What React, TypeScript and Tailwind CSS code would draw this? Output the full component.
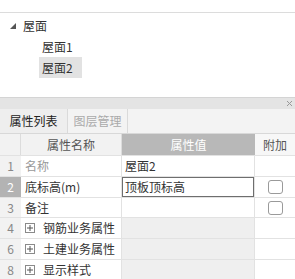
const font = {
  fontFamily: '"Noto Sans CJK SC", "Noto Sans", sans-serif',
};

type Row = {
  no: string;
  name: string;
  value?: string;
  group?: boolean;
  muted?: boolean;
  selected?: boolean;
  check?: boolean;
  short?: boolean;
};

const rows: Row[] = [
  { no: "1", name: "名称", value: "屋面2", muted: true },
  { no: "2", name: "底标高(m)", value: "顶板顶标高", selected: true, check: true },
  { no: "3", name: "备注", check: true, short: true },
  { no: "4", name: "钢筋业务属性", group: true },
  { no: "6", name: "土建业务属性", group: true },
  { no: "8", name: "显示样式", group: true, short: true },
];

function PlusBox() {
  return (
    <span className="mr-[8px] flex h-[10px] w-[10px] items-center justify-center border border-[#8a8a8a] bg-white">
      <svg width="6" height="6" viewBox="0 0 6 6">
        <path d="M0 3h6M3 0v6" stroke="#555" strokeWidth="1" />
      </svg>
    </span>
  );
}

function CheckBox() {
  return <span className="block h-[14px] w-[15px] rounded-[3px] border border-[#9a9a9a] bg-white" />;
}

export default function App() {
  return (
    <div
      className="flex h-[279px] w-[295px] flex-col overflow-hidden bg-white text-[12px] text-[#333]"
      style={font}
    >
      <div className="h-[12px] shrink-0" />
      <div className="flex h-[85px] shrink-0 flex-col border-t border-[#dcdcdc]">
        <div className="mt-[3px] flex h-[20px] items-center pl-[10px]">
          <svg width="6" height="6" viewBox="0 0 6 6" className="mr-[7px]">
            <path d="M6 0V6H0Z" fill="#555" />
          </svg>
          <span>屋面</span>
        </div>
        <div className="flex h-[21px] items-center pl-[42px]">屋面1</div>
        <div className="ml-[39px] flex h-[21px] w-[43px] items-center bg-[#e2e2e2] pl-[3px]">屋面2</div>
      </div>
      <div className="flex h-[12px] shrink-0 items-center justify-end border-t border-[#d4d4d4] bg-[#e4e4e4] pr-[3px]">
        <svg width="5" height="5" viewBox="0 0 5 5">
          <path d="M0 0L5 5M5 0L0 5" stroke="#999" strokeWidth="1" />
        </svg>
      </div>
      <div className="flex h-[24px] shrink-0 bg-[#f3f3f3]">
        <div className="flex w-[68px] items-center justify-center border-r border-[#dadada] bg-[#eeeeee] text-[#222]">
          属性列表
        </div>
        <div className="flex w-[60px] items-center justify-center border-r border-[#dadada] text-[#aaa]">
          图层管理
        </div>
      </div>
      <div className="grid h-[22px] shrink-0 grid-cols-[21px_101px_133px_40px] border-t border-[#d8d8d8]">
        <div className="border-r border-[#dcdcdc] bg-[#f2f2f2]" />
        <div className="flex items-center justify-center border-r border-[#dcdcdc] bg-[#f2f2f2] text-[#555]">
          属性名称
        </div>
        <div className="flex items-center justify-center bg-[#b8b8b8] text-white">属性值</div>
        <div className="flex items-center justify-center bg-[#f7f7f7] text-[#555]">附加</div>
      </div>
      {rows.map((r) => (
        <div
          key={r.no}
          className={
            r.short
              ? "grid h-[20px] shrink-0 grid-cols-[21px_101px_133px_40px] border-t border-[#e2e2e2]"
              : "grid h-[21px] shrink-0 grid-cols-[21px_101px_133px_40px] border-t border-[#e2e2e2]"
          }
        >
          <div
            className={
              r.selected
                ? "flex items-center justify-center bg-[#b3b3b3] text-white"
                : "flex items-center justify-center bg-[#f2f2f2] text-[#888]"
            }
          >
            {r.no}
          </div>
          <div
            className={
              r.muted
                ? "flex items-center border-r border-[#e2e2e2] pl-[4px] text-[#999]"
                : "flex items-center border-r border-[#e2e2e2] pl-[4px]"
            }
          >
            {r.group && <PlusBox />}
            {r.name}
          </div>
          <div
            className={
              r.group
                ? "border-r border-[#e2e2e2] bg-[#efefef]"
                : r.selected
                  ? "flex items-center border-r border-[#e2e2e2] p-[0px]"
                  : "flex items-center border-r border-[#e2e2e2] pl-[3px]"
            }
          >
            {r.selected ? (
              <div className="flex h-full w-full items-center border border-[#6e6e6e] pl-[2px]">{r.value}</div>
            ) : (
              r.value
            )}
          </div>
          <div className="flex items-center justify-center">{r.check && <CheckBox />}</div>
        </div>
      ))}
    </div>
  );
}
